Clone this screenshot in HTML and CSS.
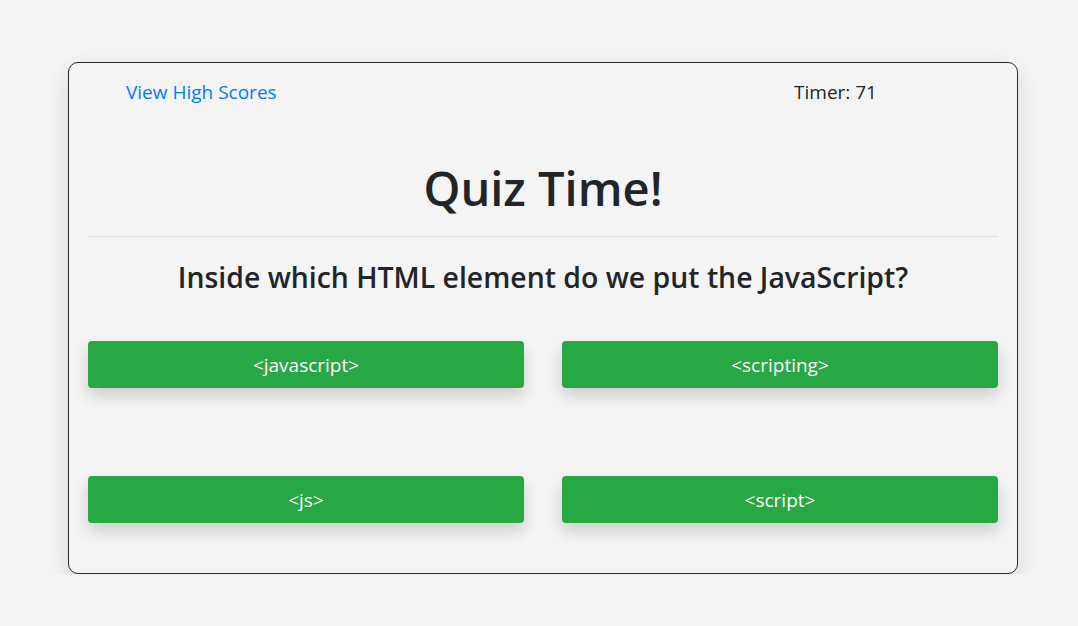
FILE: index.html
```html
<!DOCTYPE html>
<html lang="en">
<head>
<meta charset="utf-8">
<title>Quiz</title>
<link rel="stylesheet" href="styles.css">
</head>
<body>
<main class="card">
  <header class="top">
    <a class="scores" href="#">View High Scores</a>
    <span class="timer">Timer: 71</span>
  </header>
  <h1 class="title">Quiz Time!</h1>
  <hr class="rule">
  <h2 class="question">Inside which HTML element do we put the JavaScript?</h2>
  <div class="answers">
    <button class="answer">&lt;javascript&gt;</button>
    <button class="answer">&lt;scripting&gt;</button>
    <button class="answer">&lt;js&gt;</button>
    <button class="answer">&lt;script&gt;</button>
  </div>
</main>
</body>
</html>
```
FILE: styles.css
```css
* { box-sizing: border-box; }
html, body { margin: 0; padding: 0; }
body {
  background: #f4f4f4;
  font-family: "Open Sans", "Noto Sans", sans-serif;
  color: #212529;
  padding: 62px 0 0 68px;
}
.card {
  width: 950px;
  height: 512px;
  border: 1px solid #2b2b2b;
  border-radius: 10px;
  background: #f4f4f4;
  box-shadow: 0 8px 22px rgba(0,0,0,0.12);
  padding: 17px 19px 50px;
}
.top {
  display: flex;
  justify-content: space-between;
  padding: 0 121px 0 38px;
  font-size: 19px;
  line-height: 24px;
}
.scores { color: #007bff; text-decoration: none; }
.timer { color: #212529; }
.title {
  margin: 54px 0 0;
  text-align: center;
  font-size: 47px;
  line-height: 60px;
  font-weight: 600;
}
.rule {
  margin: 18px 0 0;
  border: 0;
  border-top: 1px solid #dcdcdc;
}
.question {
  margin: 22px 0 0;
  text-align: center;
  font-size: 28.4px;
  line-height: 36px;
  font-weight: 600;
}
.answers {
  margin-top: 46px;
  display: grid;
  grid-template-columns: 1fr 1fr;
  column-gap: 38px;
  row-gap: 88px;
}
.answer {
  height: 47px;
  border: 0;
  border-radius: 4px;
  background: #28a745;
  color: #fff;
  font-family: inherit;
  font-size: 19px;
  box-shadow: 0 8px 16px rgba(0,0,0,0.16);
}
```
